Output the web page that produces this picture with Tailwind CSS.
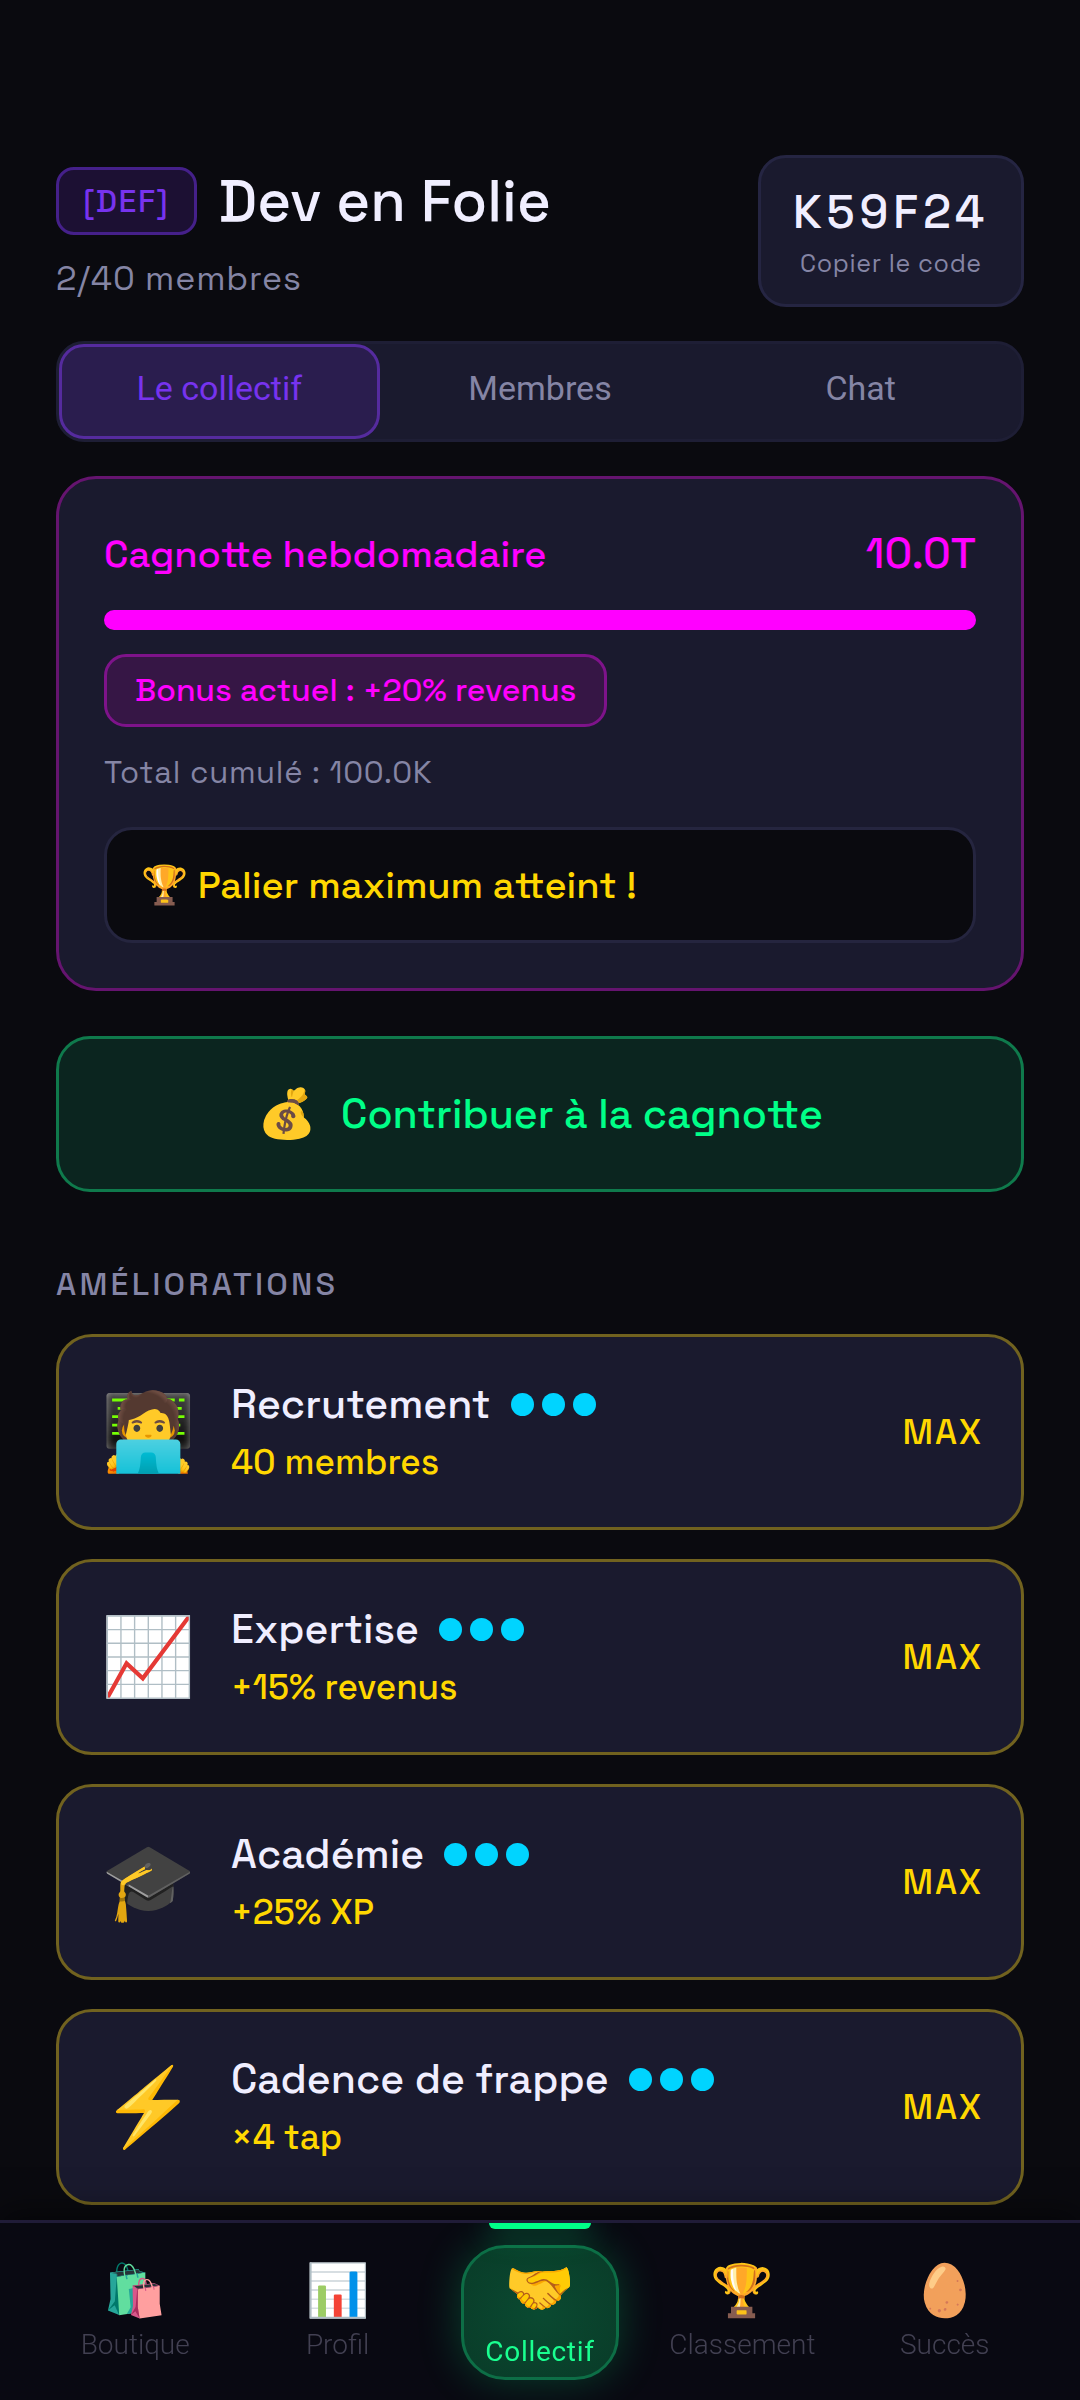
<!DOCTYPE html>
<html lang="fr">
<head>
  <meta charset="UTF-8" />
  <meta name="viewport" content="width=device-width, initial-scale=1.0"/>
  <title>Dev en Folie - Collectif</title>
  <script src="https://cdn.jsdelivr.net/npm/@tailwindcss/browser@4"></script>
</head>
<body class="bg-[#0a0a0f] min-h-screen font-['Space_Grotesk','Inter',sans-serif] text-[#f0eeff]">

  <main class="px-14 pt-[155px] pb-[190px]">

    <!-- Header -->
    <header class="flex items-center justify-between">
      <div class="pt-1">
        <div class="flex items-center gap-[22px]">
          <span class="border-3 border-[#45208a] bg-[#1c1033] rounded-[18px] px-6 py-3 text-[32px] leading-[38px] font-medium tracking-wider text-[#7733ee]">[DEF]</span>
          <h1 class="text-[58px] leading-[72px] font-medium">Dev en Folie</h1>
        </div>
        <p class="mt-5 text-[34px] leading-[44px] tracking-wide text-[#8585a5]">2/40 membres</p>
      </div>
      <button type="button" class="border-3 border-[#252542] bg-[#1a1a2e] rounded-[28px] px-8 py-6 text-center">
        <span class="block text-[47px] leading-[60px] font-medium tracking-widest">K59F24</span>
        <span class="block mt-1 text-[25px] leading-[34px] tracking-wide text-[#8585a5]">Copier le code</span>
      </button>
    </header>

    <!-- Tabs -->
    <div role="tablist" class="mt-[34px] grid grid-cols-3 border-3 border-[#1e1e35] bg-[#1a1a2e] rounded-[28px] font-[Roboto,sans-serif] text-[34px] leading-[40px] text-[#8585a5]">
      <button type="button" role="tab" aria-selected="true" class="border-3 border-[#552b9e] bg-[#2a1d4e] rounded-[25px] pt-[21px] pb-7 text-[#7733ee]">Le collectif</button>
      <button type="button" role="tab" aria-selected="false" class="pt-[21px] pb-7">Membres</button>
      <button type="button" role="tab" aria-selected="false" class="pt-[21px] pb-7">Chat</button>
    </div>

    <!-- Weekly pot -->
    <section class="mt-[34px] border-3 border-[#65146f] bg-[#1a1a2e] rounded-[40px] p-[45px]">
      <div class="flex items-center justify-between text-[#ff00ff] font-medium">
        <h2 class="text-[38px] leading-[60px]">Cagnotte hebdomadaire</h2>
        <span class="text-[43px] leading-[60px]">10.0T</span>
      </div>
      <div class="mt-[26px] h-5 rounded-full bg-[#ff00ff]"></div>
      <p class="mt-6 w-fit border-3 border-[#7e138a] bg-[#361645] rounded-[22px] px-7 py-3 text-[32px] leading-[43px] font-medium text-[#ff00ff]">Bonus actuel : +20% revenus</p>
      <p class="mt-6 text-[31px] leading-[42px] tracking-wide text-[#8585a5]">Total cumulé : 100.0K</p>
      <p class="mt-[34px] border-3 border-[#25253f] bg-[#0a0a0f] rounded-[28px] px-[34px] py-7 text-[38px] leading-[54px] font-medium text-[#ffd700]">🏆 Palier maximum atteint !</p>
    </section>

    <button type="button" class="mt-[45px] w-full flex items-center justify-center gap-6 border-3 border-[#0f7a4c] bg-[#0b251f] rounded-[34px] py-11 font-medium text-[#00ff88]">
      <span class="text-[48px] leading-[62px]">💰</span>
      <span class="text-[41px] leading-[62px]">Contribuer à la cagnotte</span>
    </button>

    <!-- Upgrades -->
    <h2 class="mt-[72px] text-[32px] leading-[40px] font-medium tracking-widest text-[#8585a5]">AMÉLIORATIONS</h2>
    <ul class="mt-[30px] flex flex-col gap-[29px]">

      <li class="flex items-center gap-9 border-3 border-[#71621f] bg-[#1a1a2e] rounded-[36px] pl-[42px] pr-[38px] py-[37px]">
        <span class="w-[94px] text-[76px] leading-[84px] text-center">🧑‍💻</span>
        <div class="flex-1 font-medium">
          <div class="flex items-center gap-5">
            <h3 class="text-[41px] leading-[60px]">Recrutement</h3>
            <span class="flex gap-2">
              <i class="size-[23px] rounded-full bg-[#00d4ff]"></i>
              <i class="size-[23px] rounded-full bg-[#00d4ff]"></i>
              <i class="size-[23px] rounded-full bg-[#00d4ff]"></i>
            </span>
          </div>
          <p class="text-[35px] leading-[56px] text-[#ffd700]">40 membres</p>
        </div>
        <span class="text-[35px] font-medium tracking-wider text-[#ffd700]">MAX</span>
      </li>

      <li class="flex items-center gap-9 border-3 border-[#71621f] bg-[#1a1a2e] rounded-[36px] pl-[42px] pr-[38px] py-[37px]">
        <span class="w-[94px] text-[76px] leading-[84px] text-center">📈</span>
        <div class="flex-1 font-medium">
          <div class="flex items-center gap-5">
            <h3 class="text-[41px] leading-[60px]">Expertise</h3>
            <span class="flex gap-2">
              <i class="size-[23px] rounded-full bg-[#00d4ff]"></i>
              <i class="size-[23px] rounded-full bg-[#00d4ff]"></i>
              <i class="size-[23px] rounded-full bg-[#00d4ff]"></i>
            </span>
          </div>
          <p class="text-[35px] leading-[56px] text-[#ffd700]">+15% revenus</p>
        </div>
        <span class="text-[35px] font-medium tracking-wider text-[#ffd700]">MAX</span>
      </li>

      <li class="flex items-center gap-9 border-3 border-[#71621f] bg-[#1a1a2e] rounded-[36px] pl-[42px] pr-[38px] py-[37px]">
        <span class="w-[94px] text-[76px] leading-[84px] text-center">🎓</span>
        <div class="flex-1 font-medium">
          <div class="flex items-center gap-5">
            <h3 class="text-[41px] leading-[60px]">Académie</h3>
            <span class="flex gap-2">
              <i class="size-[23px] rounded-full bg-[#00d4ff]"></i>
              <i class="size-[23px] rounded-full bg-[#00d4ff]"></i>
              <i class="size-[23px] rounded-full bg-[#00d4ff]"></i>
            </span>
          </div>
          <p class="text-[35px] leading-[56px] text-[#ffd700]">+25% XP</p>
        </div>
        <span class="text-[35px] font-medium tracking-wider text-[#ffd700]">MAX</span>
      </li>

      <li class="flex items-center gap-9 border-3 border-[#71621f] bg-[#1a1a2e] rounded-[36px] pl-[42px] pr-[38px] py-[37px]">
        <span class="w-[94px] text-[76px] leading-[84px] text-center">⚡</span>
        <div class="flex-1 font-medium">
          <div class="flex items-center gap-5">
            <h3 class="text-[41px] leading-[60px]">Cadence de frappe</h3>
            <span class="flex gap-2">
              <i class="size-[23px] rounded-full bg-[#00d4ff]"></i>
              <i class="size-[23px] rounded-full bg-[#00d4ff]"></i>
              <i class="size-[23px] rounded-full bg-[#00d4ff]"></i>
            </span>
          </div>
          <p class="text-[35px] leading-[56px] text-[#ffd700]">×4 tap</p>
        </div>
        <span class="text-[35px] font-medium tracking-wider text-[#ffd700]">MAX</span>
      </li>

    </ul>
  </main>

  <!-- Bottom navigation -->
  <nav class="fixed inset-x-0 bottom-0 border-t-3 border-[#201c38] bg-[#090912] shadow-[0_-8px_30px_rgba(0,0,0,0.5)] font-[Roboto,sans-serif] font-light text-[28px] leading-[36px] text-[#424052]">
    <div class="grid grid-cols-5 px-[34px] pb-5 overflow-hidden text-center">
      <a href="#" class="pt-9">
        <span class="block text-[51px] leading-[64px]">🛍️</span>
        <span class="block mt-1">Boutique</span>
      </a>
      <a href="#" class="pt-9">
        <span class="block text-[51px] leading-[64px]">📊</span>
        <span class="block mt-1">Profil</span>
      </a>
      <a href="#" aria-current="page" class="relative pt-[22px]">
        <span class="absolute top-0 inset-x-[50px] h-1.5 rounded-b-md bg-[#00ff88] shadow-[0_0_30px_rgba(0,255,136,0.6)]"></span>
        <span class="block mx-[22px] border-3 border-[#0d6e46] bg-radial from-[#0a4a31] to-[#093b28] rounded-[44px] pt-2 pb-[7px] shadow-[0_0_44px_rgba(0,255,136,0.22)]">
          <span class="block text-[57px] leading-[66px]">🤝</span>
          <span class="block mt-3 font-normal tracking-wide text-[#1aff90]">Collectif</span>
        </span>
      </a>
      <a href="#" class="pt-9">
        <span class="block text-[51px] leading-[64px]">🏆</span>
        <span class="block mt-1">Classement</span>
      </a>
      <a href="#" class="pt-9">
        <span class="block text-[51px] leading-[64px]">🥚</span>
        <span class="block mt-1">Succès</span>
      </a>
    </div>
  </nav>

</body>
</html>
